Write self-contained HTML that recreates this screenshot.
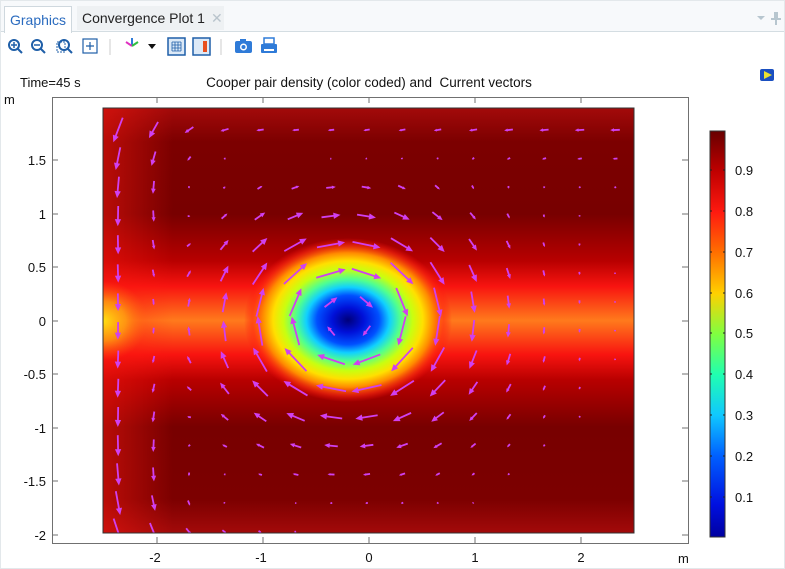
<!DOCTYPE html>
<html><head><meta charset="utf-8">
<style>
html,body{margin:0;padding:0;background:#fff;width:785px;height:569px;overflow:hidden;font-family:"Liberation Sans",sans-serif;}
.bar{position:absolute;left:0;top:0;width:785px;height:31px;background:#f7f9fb;border-bottom:1px solid #d4dde2;}
.tab1{position:absolute;left:4px;top:6px;width:66px;height:26px;background:#fff;border:1px solid #cfd8de;border-bottom:none;color:#2a6bbf;font-size:14px;line-height:26px;text-align:center;}
.tab2{position:absolute;left:77px;top:6px;width:147px;height:24px;background:#eef1f3;color:#222;font-size:14px;line-height:25px;padding-left:5px;box-sizing:border-box;}
.tab2 span{color:#b9c4cc;margin-left:6px;}
</style></head><body>
<div class="bar"></div>
<div class="tab1">Graphics</div>
<div class="tab2">Convergence Plot 1<span>✕</span></div>
<svg style="position:absolute;left:0;top:0" width="785" height="569">
<polygon points="757,16 765,16 761,20" fill="#b7c6cf"/>
<rect x="774" y="12" width="4" height="7" fill="#b7c6cf"/><rect x="771" y="18" width="10" height="2" fill="#b7c6cf"/><rect x="775" y="20" width="2" height="5" fill="#b7c6cf"/>
<g stroke="#1f5fa8" stroke-width="2" fill="none">
<circle cx="14" cy="45" r="5"/><line x1="18" y1="49" x2="22" y2="53"/><line x1="11" y1="45" x2="17" y2="45" stroke-width="1.5"/><line x1="14" y1="42" x2="14" y2="48" stroke-width="1.5"/>
<circle cx="37" cy="45" r="5"/><line x1="41" y1="49" x2="45" y2="53"/><line x1="34" y1="45" x2="40" y2="45" stroke-width="1.5"/>
<circle cx="64" cy="45" r="5"/><line x1="68" y1="49" x2="72" y2="53"/>
<rect x="57" y="42" width="8" height="10" stroke-dasharray="2 1" stroke-width="1"/>
<rect x="83" y="39" width="14" height="14" stroke-width="1.2"/><path d="M86 46h8M90 42v8" stroke-width="1.2"/>
</g>
<line x1="110" y1="39" x2="110" y2="55" stroke="#ccc"/>
<path d="M132 46v-8" stroke="#2f7bd8" stroke-width="2"/><path d="M132 46l-6-4" stroke="#e030c0" stroke-width="2"/><path d="M132 46l6-4" stroke="#30c040" stroke-width="2"/>
<polygon points="148,44 156,44 152,49" fill="#111"/>
<rect x="168" y="38" width="17" height="17" fill="#dce9f7" stroke="#1f5fa8" stroke-width="1.5"/>
<path d="M172 42h9M172 45h9M172 48h9M172 51h9M172 42v9M175 42v9M178 42v9M181 42v9" stroke="#1f5fa8" stroke-width="0.8"/>
<rect x="193" y="38" width="17" height="17" fill="#dce9f7" stroke="#1f5fa8" stroke-width="1.5"/>
<rect x="203" y="41" width="4" height="11" fill="#e85020"/>
<line x1="221" y1="39" x2="221" y2="55" stroke="#ccc"/>
<rect x="235" y="41" width="17" height="12" rx="2" fill="#2f7bd8"/><rect x="240" y="39" width="6" height="3" fill="#2f7bd8"/><circle cx="243.5" cy="47" r="3.5" fill="#fff"/><circle cx="243.5" cy="47" r="2" fill="#2f7bd8"/>
<rect x="264" y="38" width="10" height="6" fill="#fff" stroke="#2f7bd8" stroke-width="1.5"/><rect x="261" y="44" width="16" height="9" rx="1" fill="#2f7bd8"/><rect x="264" y="49" width="10" height="2" fill="#fff"/>
<rect x="760" y="69" width="14" height="12" rx="2" fill="#1a4fc0"/><polygon points="764,71 772,75 764,79" fill="#e8e030"/>

<defs>
<linearGradient id="band" x1="0" y1="0" x2="0" y2="1">
<stop offset="0" stop-color="#a30a0a"/>
<stop offset="0.08" stop-color="#7c0000"/>
<stop offset="0.25" stop-color="#780000"/>
<stop offset="0.36" stop-color="#b80000"/>
<stop offset="0.42" stop-color="#f81410"/>
<stop offset="0.5" stop-color="#ff7a1c"/>
<stop offset="0.58" stop-color="#f81410"/>
<stop offset="0.64" stop-color="#b80000"/>
<stop offset="0.75" stop-color="#780000"/>
<stop offset="0.92" stop-color="#7c0000"/>
<stop offset="1" stop-color="#a30a0a"/>
</linearGradient>
<linearGradient id="leftg" x1="0" y1="0" x2="1" y2="0">
<stop offset="0" stop-color="#ff1a10" stop-opacity="0.8"/>
<stop offset="1" stop-color="#ff1a10" stop-opacity="0"/>
</linearGradient>
<radialGradient id="ly" cx="0.5" cy="0.5" r="0.5">
<stop offset="0" stop-color="#ffe010"/>
<stop offset="0.5" stop-color="#ffb010" stop-opacity="0.7"/>
<stop offset="1" stop-color="#ff6010" stop-opacity="0"/>
</radialGradient>
<radialGradient id="vort" cx="0.5" cy="0.5" r="0.5">
<stop offset="0" stop-color="#00007a"/>
<stop offset="0.15" stop-color="#0010d8"/>
<stop offset="0.3" stop-color="#0050ff"/>
<stop offset="0.4" stop-color="#10d0ff"/>
<stop offset="0.5" stop-color="#50ff90"/>
<stop offset="0.62" stop-color="#c8ff10"/>
<stop offset="0.72" stop-color="#ffe000"/>
<stop offset="0.82" stop-color="#ff8a00"/>
<stop offset="0.92" stop-color="#ff3010" stop-opacity="0.6"/>
<stop offset="1" stop-color="#ff1010" stop-opacity="0"/>
</radialGradient>
<linearGradient id="cb" x1="0" y1="0" x2="0" y2="1">
<stop offset="0" stop-color="#680000"/>
<stop offset="0.1" stop-color="#c00000"/>
<stop offset="0.2" stop-color="#ff1a10"/>
<stop offset="0.3" stop-color="#ff7000"/>
<stop offset="0.4" stop-color="#ffd000"/>
<stop offset="0.5" stop-color="#80ff40"/>
<stop offset="0.6" stop-color="#20ffb0"/>
<stop offset="0.7" stop-color="#10c8ff"/>
<stop offset="0.8" stop-color="#0060ff"/>
<stop offset="0.92" stop-color="#0010e0"/>
<stop offset="1" stop-color="#0000a0"/>
</linearGradient>
<clipPath id="cp"><rect x="103" y="108" width="531" height="425"/></clipPath>
</defs>

<g clip-path="url(#cp)">
<rect x="103" y="108" width="531" height="425" fill="url(#band)"/>
<rect x="103" y="108" width="70" height="425" fill="url(#leftg)" opacity="0.6"/>
<ellipse cx="103" cy="321" rx="45" ry="40" fill="url(#ly)"/>
<ellipse cx="348" cy="320" rx="104" ry="82" fill="url(#vort)"/>
<g id="arrows"></g>
</g>
<rect x="103" y="108" width="531" height="425" fill="none" stroke="#333" stroke-width="1"/>

<rect x="52.5" y="97.5" width="636" height="446" fill="none" stroke="#707070"/>
<g stroke="#707070">
<line x1="52" y1="160" x2="58" y2="160"/><line x1="52" y1="214" x2="58" y2="214"/><line x1="52" y1="267" x2="58" y2="267"/><line x1="52" y1="321" x2="58" y2="321"/><line x1="52" y1="374" x2="58" y2="374"/><line x1="52" y1="428" x2="58" y2="428"/><line x1="52" y1="481" x2="58" y2="481"/><line x1="52" y1="535" x2="58" y2="535"/>
<line x1="682" y1="160" x2="688" y2="160"/><line x1="682" y1="214" x2="688" y2="214"/><line x1="682" y1="267" x2="688" y2="267"/><line x1="682" y1="321" x2="688" y2="321"/><line x1="682" y1="374" x2="688" y2="374"/><line x1="682" y1="428" x2="688" y2="428"/><line x1="682" y1="481" x2="688" y2="481"/><line x1="682" y1="535" x2="688" y2="535"/>
<line x1="157" y1="537" x2="157" y2="543"/><line x1="263" y1="537" x2="263" y2="543"/><line x1="369" y1="537" x2="369" y2="543"/><line x1="475" y1="537" x2="475" y2="543"/><line x1="581" y1="537" x2="581" y2="543"/>
<line x1="157" y1="97" x2="157" y2="103"/><line x1="263" y1="97" x2="263" y2="103"/><line x1="369" y1="97" x2="369" y2="103"/><line x1="475" y1="97" x2="475" y2="103"/><line x1="581" y1="97" x2="581" y2="103"/>
</g>
<rect x="710" y="131" width="15" height="406" fill="url(#cb)" stroke="#333" stroke-width="1"/>
<g stroke="#222" stroke-width="1">
<line x1="710" y1="170" x2="712" y2="170"/><line x1="723" y1="170" x2="725" y2="170"/>
<line x1="710" y1="211" x2="712" y2="211"/><line x1="723" y1="211" x2="725" y2="211"/>
<line x1="710" y1="252" x2="712" y2="252"/><line x1="723" y1="252" x2="725" y2="252"/>
<line x1="710" y1="293" x2="712" y2="293"/><line x1="723" y1="293" x2="725" y2="293"/>
<line x1="710" y1="333" x2="712" y2="333"/><line x1="723" y1="333" x2="725" y2="333"/>
<line x1="710" y1="374" x2="712" y2="374"/><line x1="723" y1="374" x2="725" y2="374"/>
<line x1="710" y1="415" x2="712" y2="415"/><line x1="723" y1="415" x2="725" y2="415"/>
<line x1="710" y1="456" x2="712" y2="456"/><line x1="723" y1="456" x2="725" y2="456"/>
<line x1="710" y1="497" x2="712" y2="497"/><line x1="723" y1="497" x2="725" y2="497"/>
</g>
<g font-family="Liberation Sans, sans-serif" font-size="13" fill="#111">
<text x="20" y="87">Time=45 s</text>
<text x="369" y="87" text-anchor="middle" font-size="13.5" xml:space="preserve">Cooper pair density (color coded) and  Current vectors</text>
<text x="4" y="104">m</text>
<text x="678" y="563">m</text>
<g text-anchor="end">
<text x="46" y="165">1.5</text><text x="46" y="219">1</text><text x="46" y="272">0.5</text><text x="46" y="326">0</text><text x="46" y="379">-0.5</text><text x="46" y="433">-1</text><text x="46" y="486">-1.5</text><text x="46" y="540">-2</text>
</g>
<g text-anchor="middle">
<text x="155" y="562">-2</text><text x="261" y="562">-1</text><text x="369" y="562">0</text><text x="475" y="562">1</text><text x="581" y="562">2</text>
</g>
<text x="735" y="175">0.9</text><text x="735" y="216">0.8</text><text x="735" y="257">0.7</text><text x="735" y="298">0.6</text><text x="735" y="338">0.5</text><text x="735" y="379">0.4</text><text x="735" y="420">0.3</text><text x="735" y="461">0.2</text><text x="735" y="502">0.1</text>
</g>
<rect x="0.5" y="0.5" width="784" height="568" fill="none" stroke="#e3e8eb"/>
</svg>
<script>
(function(){
var g=document.getElementById('arrows'),s='';
var cx=348,cy=320;
for(var i=0;i<15;i++){for(var j=0;j<15;j++){
 var x=118+i*35.5,y=130+j*28.7;
 var dx=x-cx,dy=(y-cy)*1.25,r=Math.sqrt(dx*dx+dy*dy)+0.01;
 var q=r/72;
 var m=32*q*q*Math.exp(2*(1-q));
 var vx=-dy/r*m,vy=dx/r*m;
 var e=(x-103);
 vy+=30*Math.exp(-e/40)+6*Math.exp(-Math.abs(x-155)/20);
 var t=Math.exp(-(y-108)/45); vx-=16*t; vy+=6*t*Math.exp(-e/150);
 var b=Math.exp(-(533-y)/45); vx+=10*b*Math.exp(-e/200); vy+=6*b*Math.exp(-e/120);
 var L=Math.sqrt(vx*vx+vy*vy); if(L<1.5)continue;
 if(L>34){vx*=34/L;vy*=34/L;L=34;}
 var ux=vx/L,uy=vy/L,x0=x-vx/2,y0=y-vy/2,x1=x+vx/2,y1=y+vy/2;
 var h=Math.min(7,L*0.4),w=h*0.45;
 s+='<line x1="'+x0+'" y1="'+y0+'" x2="'+(x1-ux*h*0.8)+'" y2="'+(y1-uy*h*0.8)+'" stroke="#d040f0" stroke-width="1.8"/>';
 s+='<polygon points="'+x1+','+y1+' '+(x1-ux*h-uy*w)+','+(y1-uy*h+ux*w)+' '+(x1-ux*h+uy*w)+','+(y1-uy*h-ux*w)+'" fill="#d040f0"/>';
}}
g.innerHTML=s;
})();
</script>
</body></html>
